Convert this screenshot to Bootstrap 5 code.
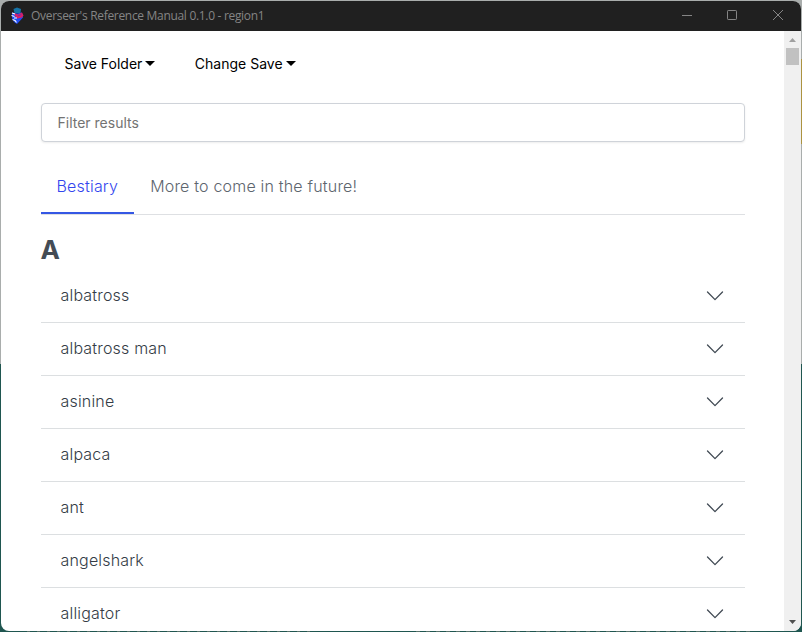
<!DOCTYPE html>
<html lang="en">
<head>
<meta charset="utf-8">
<meta name="viewport" content="width=device-width, initial-scale=1">
<title>Overseer's Reference Manual</title>
<link href="https://cdn.jsdelivr.net/npm/bootstrap@5.3.0/dist/css/bootstrap.min.css" rel="stylesheet">
<style>
html, body { height: 100%; }
body { font-family: Inter, "Liberation Sans", sans-serif; color: #525f7f; overflow: hidden;
  background: linear-gradient(#ac9340, #ac9340) 801px 59px / 1px 85px no-repeat,
    repeating-linear-gradient(90deg, #1f5650 0 7px, #58716a 7px 10px) 20px 631px / 290px 1px no-repeat,
    repeating-linear-gradient(90deg, #1f5650 0 6px, #58716a 6px 10px) 410px 631px / 340px 1px no-repeat,
    linear-gradient(#a9adac 364px, #1f5650 364px);
  padding: 1px; }
.app-window { height: 630px; border-radius: 8px; background: #fff; }
.title-bar { height: 30px; flex: none; background: #202020; color: #858585; padding-left: 8px;
  font: 12px "Open Sans", "Noto Sans", sans-serif; }
.title-text { margin: -1px 0 0 6px; letter-spacing: -.31px; }
.win-btn { width: 45.5px; height: 30px; }
.page-view { padding: 15px 39px 0 40px; }
.menu-row { padding-left: 23.5px; gap: 40px; height: 36px; }
.menu-link { font-size: 14px; line-height: 36px; color: #000; text-decoration: none; }
.menu-link.dropdown-toggle::after { margin-left: 3px; vertical-align: 3px; border-width: 5px 5px 0; margin-right: -.5px; }
.filter-box { margin-top: 21px; height: 39px; font-size: 14px; padding: 0 15.5px; border: 1px solid #cfd3d9; border-radius: 4px; box-shadow: 0 1px 2px rgba(50,50,50,.09); }
.filter-box::placeholder { color: #737373; opacity: 1; }
.tab-strip { margin-top: 17px; height: 56px; border-bottom: 1px solid #dee0e3; gap: 1px; }
.tab-strip .nav-link { border: 0; border-radius: 0; height: 55px; padding: 15px 15.5px 0; font-size: 16px; line-height: 24px; font-weight: 300; letter-spacing: .19px; color: #5d656e; margin: 0; }
.tab-strip .nav-link.active { color: #3346ee; border-bottom: 2px solid #3557e4; background: none; }
.letter { font-size: 26px; line-height: 34px; font-weight: 700; color: #444c55; margin: 18px 0 3px -.5px; }
.beast-list { border-radius: 0; }
.beast { height: 53px; padding: 0 21px 2px 19.5px; border: 0; border-bottom: 1px solid #dcdfe1; font-size: 16px; font-weight: 300; letter-spacing: .18px; color: #343c46; background: none; }
.beast svg { margin-top: 2px; }
.scroll-track { width: 17px; background: #f0f0f0; flex: none; }
.scroll-thumb { width: 13px; height: 17px; background: #c1c1c1; }
</style>
</head>
<body>
<div class="app-window d-flex flex-column overflow-hidden">
  <header class="title-bar d-flex align-items-center">
    <svg width="16" height="18" viewBox="0 0 16 18">
      <path d="M4.500 2 8 .5l4 1.500-.5 4h-6z" fill="#1674a8"/>
      <path d="M3 5.500 8 6.500l5-1 1 5-6 6.500-3-2-2-4z" fill="#204df2"/>
      <path d="M5 6 9 7.500 13 5.500l1.500 3-1.500 2-4.500 1L6 9z" fill="#d91f69"/>
      <path d="M8.500 8.500 12.500 7l-1 1.500-2.500 1z" fill="#762bab"/>
      <path d="M3 6l3 1M2.500 8.500l3 1M5 11h3M3.500 12.500l2.500 1 1.500 2" fill="none" stroke="#fff" stroke-width="1.1"/>
    </svg>
    <span class="title-text">Overseer's Reference Manual 0.1.0 - region1</span>
    <div class="d-flex ms-auto">
      <svg class="win-btn" viewBox="0 0 45.5 30" fill="none" stroke="#858585"><path d="M17 14.500h10"/></svg>
      <svg class="win-btn" viewBox="0 0 45.5 30" fill="none" stroke="#858585"><rect x="17.500" y="9.500" width="9" height="9" rx=".7"/></svg>
      <svg class="win-btn" viewBox="0 0 45.5 30" fill="none" stroke="#858585"><path d="m17 9 10 10m0-10-10 10"/></svg>
    </div>
  </header>
  <div class="d-flex flex-grow-1 overflow-hidden">
    <main class="page-view flex-grow-1 overflow-hidden">
      <nav class="menu-row d-flex">
        <a class="menu-link dropdown-toggle" href="#">Save Folder</a>
        <a class="menu-link dropdown-toggle" href="#">Change Save</a>
      </nav>
      <input class="form-control filter-box" type="text" placeholder="Filter results" aria-label="Filter results">
      <ul class="nav tab-strip">
        <li class="nav-item"><a class="nav-link active" href="#">Bestiary</a></li>
        <li class="nav-item"><a class="nav-link" href="#">More to come in the future!</a></li>
      </ul>
      <h2 class="letter">A</h2>
      <svg class="d-none"><symbol id="chevron" viewBox="0 0 18 18"><path d="m1.500 5 7.500 7.600L16.500 5" fill="none" stroke="#414a54" stroke-width="1.3" stroke-linecap="round" stroke-linejoin="round"/></symbol></svg>
      <div class="list-group beast-list">
        <div class="list-group-item beast d-flex align-items-center justify-content-between">albatross<svg width="18" height="18"><use href="#chevron"/></svg></div>
        <div class="list-group-item beast d-flex align-items-center justify-content-between">albatross man<svg width="18" height="18"><use href="#chevron"/></svg></div>
        <div class="list-group-item beast d-flex align-items-center justify-content-between">asinine<svg width="18" height="18"><use href="#chevron"/></svg></div>
        <div class="list-group-item beast d-flex align-items-center justify-content-between">alpaca<svg width="18" height="18"><use href="#chevron"/></svg></div>
        <div class="list-group-item beast d-flex align-items-center justify-content-between">ant<svg width="18" height="18"><use href="#chevron"/></svg></div>
        <div class="list-group-item beast d-flex align-items-center justify-content-between">angelshark<svg width="18" height="18"><use href="#chevron"/></svg></div>
        <div class="list-group-item beast d-flex align-items-center justify-content-between">alligator<svg width="18" height="18"><use href="#chevron"/></svg></div>
      </div>
    </main>
    <aside class="scroll-track d-flex flex-column align-items-center">
      <svg width="17" height="17" viewBox="0 0 17 17"><path d="M5 11h7L8.500 7z" fill="#a0a0a0"/></svg>
      <div class="scroll-thumb"></div>
      <svg class="mt-auto" width="17" height="17" viewBox="0 0 17 17"><path d="M5 6h7l-3.500 4z" fill="#505050"/></svg>
    </aside>
  </div>
</div>
<script src="https://cdn.jsdelivr.net/npm/bootstrap@5.3.0/dist/js/bootstrap.bundle.min.js"></script>
</body>
</html>
